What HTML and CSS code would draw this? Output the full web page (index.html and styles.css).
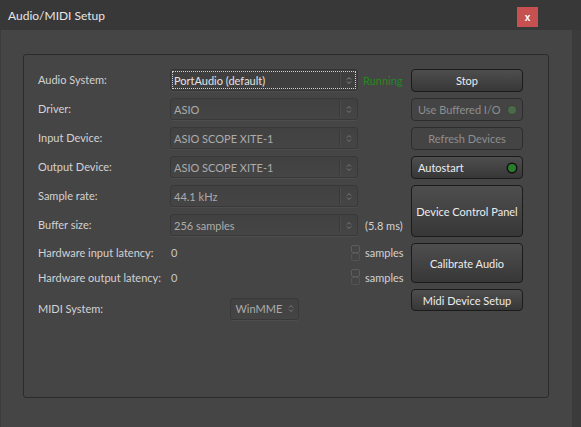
FILE: index.html
```html
<!DOCTYPE html>
<html>
<head>
<meta charset="utf-8">
<link rel="stylesheet" href="styles.css">
</head>
<body>
<div class="window">
  <div class="titlebar">
    <span class="title">Audio/MIDI Setup</span>
    <span class="close">x</span>
  </div>
  <div class="client">
    <div class="content">
      <div class="group">
        <div class="grid">
          <div class="label">Audio System:</div>
          <div class="combo focus"><span class="ctext">PortAudio (default)</span><span class="sep"></span><svg class="arr" width="6" height="9" viewBox="0 0 6 9"><path d="M1 3.5 L3 1.5 L5 3.5 M1 5.5 L3 7.5 L5 5.5" fill="none" stroke="#8a8a8a" stroke-width="1"/></svg></div>
          <div class="status running">Running</div>

          <div class="label">Driver:</div>
          <div class="combo"><span class="ctext">ASIO</span><span class="sep"></span><svg class="arr" width="6" height="9" viewBox="0 0 6 9"><path d="M1 3.5 L3 1.5 L5 3.5 M1 5.5 L3 7.5 L5 5.5" fill="none" stroke="#7a7a7a" stroke-width="1"/></svg></div>
          <div class="status"></div>

          <div class="label">Input Device:</div>
          <div class="combo"><span class="ctext">ASIO SCOPE XITE-1</span><span class="sep"></span><svg class="arr" width="6" height="9" viewBox="0 0 6 9"><path d="M1 3.5 L3 1.5 L5 3.5 M1 5.5 L3 7.5 L5 5.5" fill="none" stroke="#7a7a7a" stroke-width="1"/></svg></div>
          <div class="status"></div>

          <div class="label">Output Device:</div>
          <div class="combo"><span class="ctext">ASIO SCOPE XITE-1</span><span class="sep"></span><svg class="arr" width="6" height="9" viewBox="0 0 6 9"><path d="M1 3.5 L3 1.5 L5 3.5 M1 5.5 L3 7.5 L5 5.5" fill="none" stroke="#7a7a7a" stroke-width="1"/></svg></div>
          <div class="status"></div>

          <div class="label">Sample rate:</div>
          <div class="combo"><span class="ctext">44.1 kHz</span><span class="sep"></span><svg class="arr" width="6" height="9" viewBox="0 0 6 9"><path d="M1 3.5 L3 1.5 L5 3.5 M1 5.5 L3 7.5 L5 5.5" fill="none" stroke="#7a7a7a" stroke-width="1"/></svg></div>
          <div class="status"></div>

          <div class="label">Buffer size:</div>
          <div class="combo"><span class="ctext">256 samples</span><span class="sep"></span><svg class="arr" width="6" height="9" viewBox="0 0 6 9"><path d="M1 3.5 L3 1.5 L5 3.5 M1 5.5 L3 7.5 L5 5.5" fill="none" stroke="#7a7a7a" stroke-width="1"/></svg></div>
          <div class="status">(5.8 ms)</div>

          <div class="label lat first">Hardware input latency:</div>
          <div class="spinrow first"><span class="num">0</span><span class="spin"><span class="half"></span><span class="half"></span></span></div>
          <div class="status lat first">samples</div>

          <div class="label lat">Hardware output latency:</div>
          <div class="spinrow"><span class="num">0</span><span class="spin"><span class="half"></span><span class="half"></span></span></div>
          <div class="status lat">samples</div>

          <div class="label midi">MIDI System:</div>
          <div class="midicell"><div class="combo small"><span class="ctext">WinMME</span><span class="sep"></span><svg class="arr" width="6" height="9" viewBox="0 0 6 9"><path d="M1 3.5 L3 1.5 L5 3.5 M1 5.5 L3 7.5 L5 5.5" fill="none" stroke="#7a7a7a" stroke-width="1"/></svg></div></div>
          <div class="status midi"></div>
        </div>
        <div class="buttons">
          <div class="btn">Stop</div>
          <div class="btn disabled led-btn"><span>Use Buffered I/O</span><span class="led dim"></span></div>
          <div class="btn disabled">Refresh Devices</div>
          <div class="btn led-btn"><span>Autostart</span><span class="led on"></span></div>
          <div class="btn tall">Device Control Panel</div>
          <div class="btn mid">Calibrate Audio</div>
          <div class="btn">Midi Device Setup</div>
        </div>
      </div>
    </div>
    <div class="edge"></div>
  </div>
</div>
</body>
</html>
```

FILE: styles.css
```css
* { box-sizing: border-box; }
html, body {
  margin: 0;
  padding: 0;
  width: 581px;
  height: 427px;
  overflow: hidden;
  background: #3c3b3c;
}
.window {
  width: 581px;
  height: 427px;
  display: flex;
  flex-direction: column;
  font-family: Lato, "Noto Sans", sans-serif;
  font-size: 11px;
  color: #d4d4d4;
}
.titlebar {
  height: 30px;
  background: #383838;
  display: flex;
  align-items: center;
  padding-left: 8px;
  position: relative;
}
.title {
  font-size: 12px;
  color: #e6e6e6;
}
.close {
  position: absolute;
  left: 517px;
  top: 7px;
  width: 21px;
  height: 20px;
  background: #c75050;
  color: #fff;
  font-size: 10px;
  font-weight: bold;
  display: flex;
  align-items: center;
  justify-content: center;
  font-family: "Liberation Sans", sans-serif;
}
.client {
  flex: 1;
  display: flex;
}
.content {
  width: 572px;
  background: #464546;
  border-left: 1px solid #3c3b3c;
  padding-top: 24px;
  padding-left: 22px;
}
.edge {
  flex: 1;
  background: #3c3b3c;
}
.group {
  width: 526px;
  height: 344px;
  border: 1px solid #2c2b2c;
  border-radius: 3px;
  display: flex;
  padding-top: 14px;
  padding-left: 14px;
}
.grid {
  display: grid;
  grid-template-columns: 132px 188px 53px;
  grid-auto-rows: 22px;
  row-gap: 7px;
  align-items: center;
}
.label {
  color: #d2d2d2;
  height: 22px;
  display: flex;
  align-items: center;
  margin-top: -1px;
  white-space: nowrap;
}
.status {
  height: 22px;
  display: flex;
  align-items: center;
  padding-left: 7px;
  color: #d2d2d2;
  white-space: nowrap;
}
.running { color: #1f8a1f; padding-left: 5px; }
.combo {
  height: 22px;
  border: 1px solid #3a393a;
  border-radius: 3px;
  background: linear-gradient(#424142, #464546);
  box-shadow: 0 1px 0 #4e4d4e;
  display: flex;
  align-items: center;
  color: #ababab;
  position: relative;
}
.combo.focus {
  color: #e2e2e2;
  background: #403f40;
  border-color: #353435;
}
.combo.focus::before {
  content: "";
  position: absolute;
  left: 1px; top: 1px; right: 1px; bottom: 1px;
  border: 1px dotted #cfcfcf;
  border-radius: 1px;
}
.ctext {
  flex: 1;
  padding-left: 3px;
  white-space: nowrap;
}
.sep {
  width: 1px;
  height: 16px;
  background: #3a393a;
  box-shadow: 1px 0 0 #4d4c4d;
}
.arr {
  margin: 0 5px 0 6px;
  flex: none;
}
.lat { height: 20px; }
.spinrow {
  height: 20px;
  display: flex;
  align-items: center;
  justify-content: space-between;
  margin-right: -2px;
  color: #c8c8c8;
}
.spinrow .num { padding-left: 1px; }
.first { margin-top: -3px; }
.lat:not(.first), .spinrow:not(.first) { margin-top: -12px; }
.midi, .midicell { margin-top: -7px; }
.spin {
  width: 9px;
  height: 16px;
  display: flex;
  flex-direction: column;
}
.half {
  flex: 1;
  border: 1px solid #5e5d5e;
  border-radius: 2px;
}
.half + .half { border-color: #555455; }
.midicell {
  display: flex;
  justify-content: center;
  height: 22px;
}
.combo.small { width: 69px; }
.combo.small .ctext { padding-left: 5px; }
.combo.small .arr { margin: 0 6px 0 6px; }
.buttons {
  width: 112px;
  display: flex;
  flex-direction: column;
  gap: 6px;
}
.btn {
  height: 23px;
  border: 1px solid #1c1b1c;
  border-radius: 4px;
  background: linear-gradient(#4f4e4f, #383738);
  color: #ececec;
  display: flex;
  align-items: center;
  justify-content: center;
  white-space: nowrap;
}
.btn.disabled {
  background: #454445;
  border-color: #2e2d2e;
  color: #8e8e8e;
}
.led-btn {
  justify-content: space-between;
  padding: 0 6px 0 6px;
}
.led {
  width: 8px;
  height: 8px;
  border-radius: 50%;
}
.led.dim {
  background: #4a6a4a;
  box-shadow: 0 0 0 1px #3b443b;
}
.led.on {
  background: #2a7d2a;
  box-shadow: 0 0 0 1.5px #111;
}
.btn.tall { height: 52px; }
.btn.mid { height: 40px; }
.btn:last-child { height: 22px; }
```
